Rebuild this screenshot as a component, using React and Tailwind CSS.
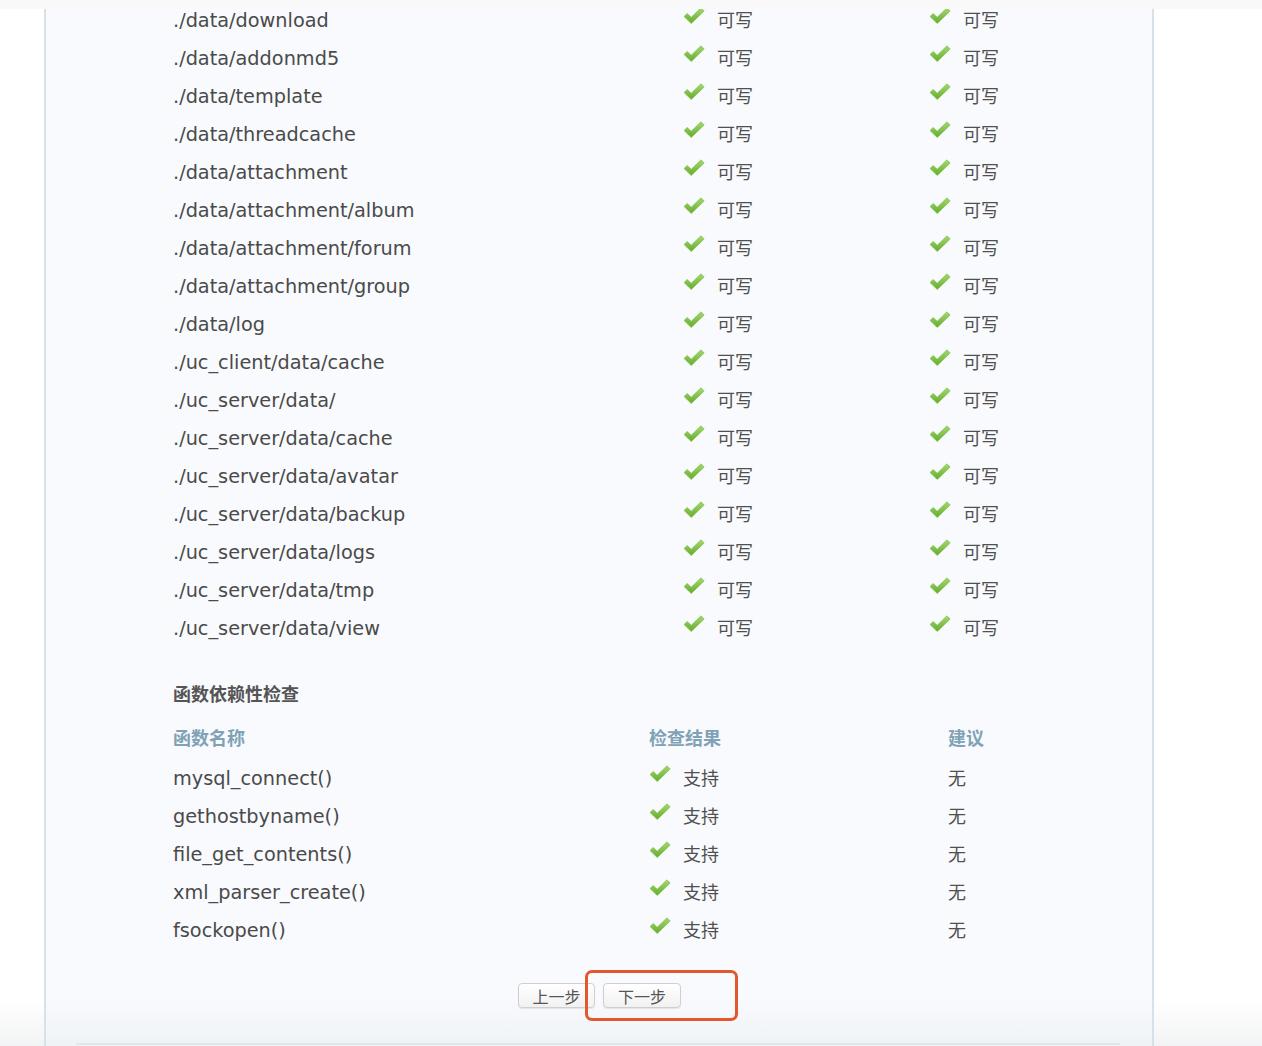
import React from "react";

const dirs = [
  "./data/download",
  "./data/addonmd5",
  "./data/template",
  "./data/threadcache",
  "./data/attachment",
  "./data/attachment/album",
  "./data/attachment/forum",
  "./data/attachment/group",
  "./data/log",
  "./uc_client/data/cache",
  "./uc_server/data/",
  "./uc_server/data/cache",
  "./uc_server/data/avatar",
  "./uc_server/data/backup",
  "./uc_server/data/logs",
  "./uc_server/data/tmp",
  "./uc_server/data/view",
];

const funcs = [
  "mysql_connect()",
  "gethostbyname()",
  "file_get_contents()",
  "xml_parser_create()",
  "fsockopen()",
];

const latin = { fontFamily: '"DejaVu Sans", "Noto Sans CJK SC", sans-serif' };

function Check() {
  return (
    <svg width="22" height="18" viewBox="0 0 22 18" className="-mt-2 shrink-0">
      <defs>
        <linearGradient id="chk" x1="0" y1="0" x2="0" y2="1">
          <stop offset="0" stopColor="#a6d86e" />
          <stop offset="1" stopColor="#62ad2c" />
        </linearGradient>
      </defs>
      <path d="M1 9.5 L4.2 6.4 L8.2 10.2 L18 0.8 L21.2 4 L8.3 16.6 Z" fill="url(#chk)" stroke="#79bd43" strokeWidth="0.6" strokeLinejoin="round" />
    </svg>
  );
}

function Status({ label }) {
  return (
    <div className="flex items-center gap-[12px]">
      <Check />
      <span className="text-[18px] text-[#505050] pb-[2px]">{label}</span>
    </div>
  );
}

export default function App() {
  return (
    <div
      className="w-[1262px] h-[1046px] overflow-hidden flex flex-col bg-[linear-gradient(to_bottom,#ffffff_0,#ffffff_1000px,#f2f3f4_1046px)] text-[#4a4a4a]"
      style={{ fontFamily: '"Noto Sans CJK SC", "DejaVu Sans", sans-serif' }}
    >
      {/* top strip */}
      <div className="h-[9px] shrink-0 bg-[#f9f9f9]" />

      <div className="flex flex-1 min-h-0">
        <div className="w-[44px] shrink-0" />

        {/* main panel */}
        <div className="w-[1110px] shrink-0 border-x-2 border-[#d6e1e8] bg-[linear-gradient(to_bottom,#f8fafd_0,#f8fafd_990px,#f0f3f6_1037px)] overflow-hidden flex flex-col">
          <div className="pl-[127px] -mt-2">
            {/* directory checks */}
            {dirs.map((d) => (
              <div key={d} className="h-[38px] grid grid-cols-[510px_246px_1fr] items-center">
                <span className="text-[19.3px] pt-[2px]" style={latin}>{d}</span>
                <Status label="可写" />
                <Status label="可写" />
              </div>
            ))}

            {/* function check */}
            <div className="mt-[27px] h-[38px] flex items-center text-[18px] font-bold text-[#555]">
              函数依赖性检查
            </div>
            <div className="h-[47px] pt-[8px] pb-[5px] grid grid-cols-[476px_299px_1fr] items-center text-[18px] font-bold text-[#7fa2b6]">
              <span>函数名称</span>
              <span>检查结果</span>
              <span>建议</span>
            </div>
            {funcs.map((f) => (
              <div key={f} className="h-[38px] grid grid-cols-[476px_299px_1fr] items-center">
                <span className="text-[19.3px] pt-[2px]" style={latin}>{f}</span>
                <Status label="支持" />
                <span className="text-[18px] text-[#505050] pb-[2px]">无</span>
              </div>
            ))}
          </div>

          {/* buttons */}
          <div className="mt-[34px] flex justify-center pl-[1px]">
            <div className="relative flex gap-[8px]">
              <button className="h-[25px] w-[77px] rounded-[4px] border border-[#cfcfcf] bg-[linear-gradient(to_bottom,#ffffff,#f1f1f1)] text-[16px] leading-none text-[#555] shadow-[0_1px_1px_rgba(0,0,0,0.08)]">
                上一步
              </button>
              <button className="h-[25px] w-[78px] rounded-[4px] border border-[#cfcfcf] bg-[linear-gradient(to_bottom,#ffffff,#f1f1f1)] text-[16px] leading-none text-[#555] shadow-[0_1px_1px_rgba(0,0,0,0.08)]">
                下一步
              </button>
              <div className="absolute left-[67px] top-[-13px] w-[153px] h-[51px] rounded-[7px] border-[3px] border-[#e0582b]" />
            </div>
          </div>

          <div className="flex-1" />
          <div className="ml-[30px] mr-[32px] h-[2px] bg-[#e1e8ec] mb-[1px]" />
        </div>
        <div className="flex-1" />
      </div>
    </div>
  );
}
